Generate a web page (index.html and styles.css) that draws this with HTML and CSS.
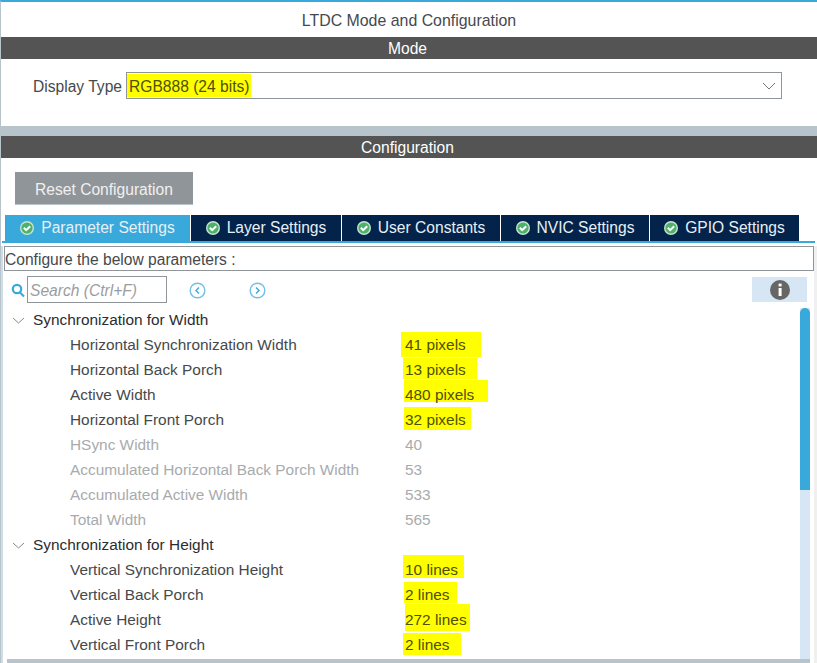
FILE: index.html
```html
<!DOCTYPE html>
<html lang="en">
<head>
    <meta charset="UTF-8">
    <title>LTDC Mode and Configuration</title>
    <link rel="stylesheet" href="styles.css">
</head>
<body>
    <div class="container">
        <div class="page-title">LTDC Mode and Configuration</div>
        <div class="bar">Mode</div>
        <div class="mode-section">
            <span class="mode-label">Display Type</span>
            <div class="select">
                <span class="mark-select">RGB888 (24 bits)</span>
                <svg class="select-arrow" width="14" height="8" viewBox="0 0 14 8"><path d="M1 1l6 6 6-6" fill="none" stroke="#777" stroke-width="1"/></svg>
            </div>
        </div>
        <div class="band"></div>
        <div class="bar">Configuration</div>
        <div class="reset-section">
            <button class="reset-btn">Reset Configuration</button>
        </div>
        <div class="tabs">
            <div class="tab tab-active tab-param"><svg class="check" viewBox="0 0 14 14"><circle cx="7" cy="7" r="7" fill="#c4e6d0"/><circle cx="7" cy="7" r="5.6" fill="#4fb06c"/><path d="M3.8 6.8l2.4 2.4 4-4" fill="none" stroke="#fff" stroke-width="2"/></svg>Parameter Settings</div>
            <div class="tab tab-layer"><svg class="check" viewBox="0 0 14 14"><circle cx="7" cy="7" r="7" fill="#c4e6d0"/><circle cx="7" cy="7" r="5.6" fill="#4fb06c"/><path d="M3.8 6.8l2.4 2.4 4-4" fill="none" stroke="#fff" stroke-width="2"/></svg>Layer Settings</div>
            <div class="tab tab-user"><svg class="check" viewBox="0 0 14 14"><circle cx="7" cy="7" r="7" fill="#c4e6d0"/><circle cx="7" cy="7" r="5.6" fill="#4fb06c"/><path d="M3.8 6.8l2.4 2.4 4-4" fill="none" stroke="#fff" stroke-width="2"/></svg>User Constants</div>
            <div class="tab tab-nvic"><svg class="check" viewBox="0 0 14 14"><circle cx="7" cy="7" r="7" fill="#c4e6d0"/><circle cx="7" cy="7" r="5.6" fill="#4fb06c"/><path d="M3.8 6.8l2.4 2.4 4-4" fill="none" stroke="#fff" stroke-width="2"/></svg>NVIC Settings</div>
            <div class="tab tab-gpio"><svg class="check" viewBox="0 0 14 14"><circle cx="7" cy="7" r="7" fill="#c4e6d0"/><circle cx="7" cy="7" r="5.6" fill="#4fb06c"/><path d="M3.8 6.8l2.4 2.4 4-4" fill="none" stroke="#fff" stroke-width="2"/></svg>GPIO Settings</div>
        </div>
        <div class="tab-line"></div>
        <div class="panel">
            <div class="hint">Configure the below parameters :</div>
            <div class="search-row">
                <svg class="search-icon" width="14" height="15" viewBox="0 0 14 15"><circle cx="6" cy="6" r="4.2" fill="none" stroke="#39a9dc" stroke-width="2.2"/><path d="M9 9.5l4 4" stroke="#39a9dc" stroke-width="2.2"/></svg>
                <div class="search-box">Search (Ctrl+F)</div>
                <svg class="nav-prev" width="17" height="17" viewBox="0 0 17 17"><circle cx="8.5" cy="8.5" r="7.3" fill="none" stroke="#6fc0e6" stroke-width="1.4"/><path d="M10 5.5l-3 3 3 3" fill="none" stroke="#39a9dc" stroke-width="1.4"/></svg>
                <svg class="nav-next" width="17" height="17" viewBox="0 0 17 17"><circle cx="8.5" cy="8.5" r="7.3" fill="none" stroke="#6fc0e6" stroke-width="1.4"/><path d="M7 5.5l3 3-3 3" fill="none" stroke="#39a9dc" stroke-width="1.4"/></svg>
                <div class="info-btn"><svg width="20" height="20" viewBox="0 0 20 20"><circle cx="10" cy="10" r="10" fill="#666"/><rect x="8.6" y="8" width="3" height="8" fill="#fff"/><rect x="8.6" y="3.6" width="3" height="2.8" fill="#fff"/></svg></div>
            </div>
            <div class="tree-wrap">
                <div class="tree">
                    <div class="row group"><svg class="tree-arrow" width="13" height="7" viewBox="0 0 13 7"><path d="M1 1l5.5 5 5.5-5" fill="none" stroke="#888" stroke-width="1"/></svg>Synchronization for Width</div>
                    <div class="row"><span class="name">Horizontal Synchronization Width</span><span class="mark mark-a">41 pixels</span></div>
                    <div class="row"><span class="name">Horizontal Back Porch</span><span class="mark mark-b">13 pixels</span></div>
                    <div class="row"><span class="name">Active Width</span><span class="mark mark-c">480 pixels</span></div>
                    <div class="row"><span class="name">Horizontal Front Porch</span><span class="mark mark-d">32 pixels</span></div>
                    <div class="row off"><span class="name">HSync Width</span><span>40</span></div>
                    <div class="row off"><span class="name">Accumulated Horizontal Back Porch Width</span><span>53</span></div>
                    <div class="row off"><span class="name">Accumulated Active Width</span><span>533</span></div>
                    <div class="row off"><span class="name">Total Width</span><span>565</span></div>
                    <div class="row group"><svg class="tree-arrow" width="13" height="7" viewBox="0 0 13 7"><path d="M1 1l5.5 5 5.5-5" fill="none" stroke="#888" stroke-width="1"/></svg>Synchronization for Height</div>
                    <div class="row"><span class="name">Vertical Synchronization Height</span><span class="mark mark-e">10 lines</span></div>
                    <div class="row"><span class="name">Vertical Back Porch</span><span class="mark mark-f">2 lines</span></div>
                    <div class="row"><span class="name">Active Height</span><span class="mark mark-g">272 lines</span></div>
                    <div class="row"><span class="name">Vertical Front Porch</span><span class="mark mark-h">2 lines</span></div>
                </div>
                <div class="scrollbar"><div class="thumb"></div></div>
            </div>
            <div class="bottom-band"></div>
        </div>
    </div>
</body>
</html>
```

FILE: styles.css
```css
html, body {
    margin: 0;
    padding: 0;
    height: 663px;
    overflow: hidden;
    background-color: #fff;
}
body {
    font-family: "Liberation Sans", Arial, sans-serif;
    font-size: 15.6px;
    color: #46494c;
}
.container {
    width: 817px;
    height: 663px;
    box-sizing: border-box;
    border-top: 2px solid #39a9dc;
    border-left: 1px solid #b8c4cb;
    overflow: hidden;
}
.page-title {
    height: 35px;
    line-height: 37px;
    text-align: center;
    font-size: 15.9px;
}
.bar {
    height: 22px;
    line-height: 24px;
    padding-right: 3px;
    background-color: #535453;
    color: #fff;
    text-align: center;
}
.mode-section {
    height: 67px;
    box-sizing: border-box;
    padding: 13px 35px 0 32px;
    display: flex;
    align-items: flex-start;
}
.mode-label {
    line-height: 29px;
    margin-right: 4px;
}
.select {
    flex: 1;
    height: 27px;
    box-sizing: border-box;
    border: 1px solid #90959a;
    display: flex;
    align-items: center;
    justify-content: space-between;
}
.select-arrow {
    margin-right: 5px;
}
.mark-select {
    width: 124px;
    height: 23px;
    line-height: 25px;
    box-sizing: border-box;
    padding-left: 2px;
    background-color: #ffff00;
    color: #4f4f00;
    white-space: nowrap;
}
.band {
    height: 10px;
    background-color: #b8c4cb;
}
.reset-section {
    height: 57px;
    box-sizing: border-box;
    padding: 14px 0 0 14px;
}
.reset-btn {
    width: 178px;
    height: 33px;
    border: none;
    border-bottom: 1px solid #b8c4cb;
    background-color: #90959a;
    color: #f0f0f0;
    font: inherit;
    padding: 4px 0 0 0;
}
.tabs {
    display: flex;
    height: 26px;
    margin-left: 4px;
    gap: 1px;
}
.tab {
    box-sizing: border-box;
    background-color: #03234b;
    color: #e8f0f5;
    display: flex;
    align-items: center;
    justify-content: center;
    white-space: nowrap;
}
.tab-active {
    background-color: #39a9dc;
}
.tab-param { width: 185px; }
.tab-layer { width: 150px; }
.tab-user { width: 158px; }
.tab-nvic { width: 148px; }
.tab-gpio { width: 149px; }
.check {
    width: 14px;
    height: 14px;
    margin-right: 7px;
}
.tab-line {
    height: 2px;
    margin-left: 1px;
    background-color: #39a9dc;
    margin-right: 2px;
}
.panel {
    border-left: 2px solid #cfdce4;
    border-right: 3px solid #f0f0f0;
}
.hint {
    margin: 3px 0 0 1px;
    height: 25px;
    box-sizing: border-box;
    border: 1px solid #90959a;
    line-height: 25px;
    white-space: nowrap;
}
.search-row {
    height: 37px;
    display: flex;
    align-items: flex-start;
    position: relative;
    padding: 5px 0 0 8px;
    box-sizing: border-box;
}
.search-icon {
    margin: 7px 2px 0 0;
}
.search-box {
    width: 140px;
    height: 27px;
    box-sizing: border-box;
    border: 1px solid #90959a;
    padding-left: 2px;
    line-height: 27px;
    font-style: italic;
    color: #9a9da0;
}
.nav-prev {
    margin: 6px 0 0 22px;
}
.nav-next {
    margin: 6px 0 0 43px;
}
.info-btn {
    position: absolute;
    left: 749px;
    top: 6px;
    width: 55px;
    height: 25px;
    background-color: #d6e6f4;
    display: flex;
    align-items: center;
    justify-content: center;
}
.tree-wrap {
    display: flex;
    height: 351px;
    padding-right: 4px;
}
.tree {
    flex: 1;
    font-size: 15.4px;
}
.row {
    height: 25px;
    box-sizing: border-box;
    line-height: 23px;
    padding-bottom: 2px;
    display: flex;
    align-items: center;
    padding-left: 67px;
    color: #46494c;
    white-space: nowrap;
}
.group {
    padding-left: 9px;
    color: #2b2d30;
}
.tree-arrow {
    margin: 2px 8px 0 0;
}
.name {
    width: 335px;
}
.off {
    color: #a8abad;
}
/* hand painted highlights, each one a bit different */
.mark {
    align-self: flex-start;
    box-sizing: border-box;
    background-color: #ffff00;
    color: #4f4f00;
    line-height: 21px;
}
.mark-a { width: 80px; height: 25px; margin: -1px 0 0 -4px; padding: 2px 0 0 4px; }
.mark-b { width: 74px; height: 21px; margin: 0 0 0 -2px; padding: 1px 0 0 2px; }
.mark-c { width: 84px; height: 22px; margin: -3px 0 0 -1px; padding: 4px 0 0 1px; }
.mark-d { width: 67px; height: 23px; margin: -1px 0 0 -1px; padding: 2px 0 0 1px; }
.mark-e { width: 61px; height: 23px; margin: -3px 0 0 -2px; padding: 4px 0 0 2px; }
.mark-f { width: 53px; height: 21px; margin: -1px 0 0 -1px; padding: 2px 0 0 1px; }
.mark-g { width: 65px; height: 27px; margin: -4px 0 0 0; padding: 5px 0 0 0; }
.mark-h { width: 58px; height: 22px; margin: 0 0 0 -2px; padding: 1px 0 0 2px; }
.scrollbar {
    width: 10px;
    background-color: #d6e6f4;
}
.thumb {
    height: 182px;
    background-color: #39a9dc;
    border-radius: 5px 5px 0 0;
}
.bottom-band {
    height: 4px;
    margin: 0 4px 0 4px;
    background-color: #b8c4cb;
}
```
